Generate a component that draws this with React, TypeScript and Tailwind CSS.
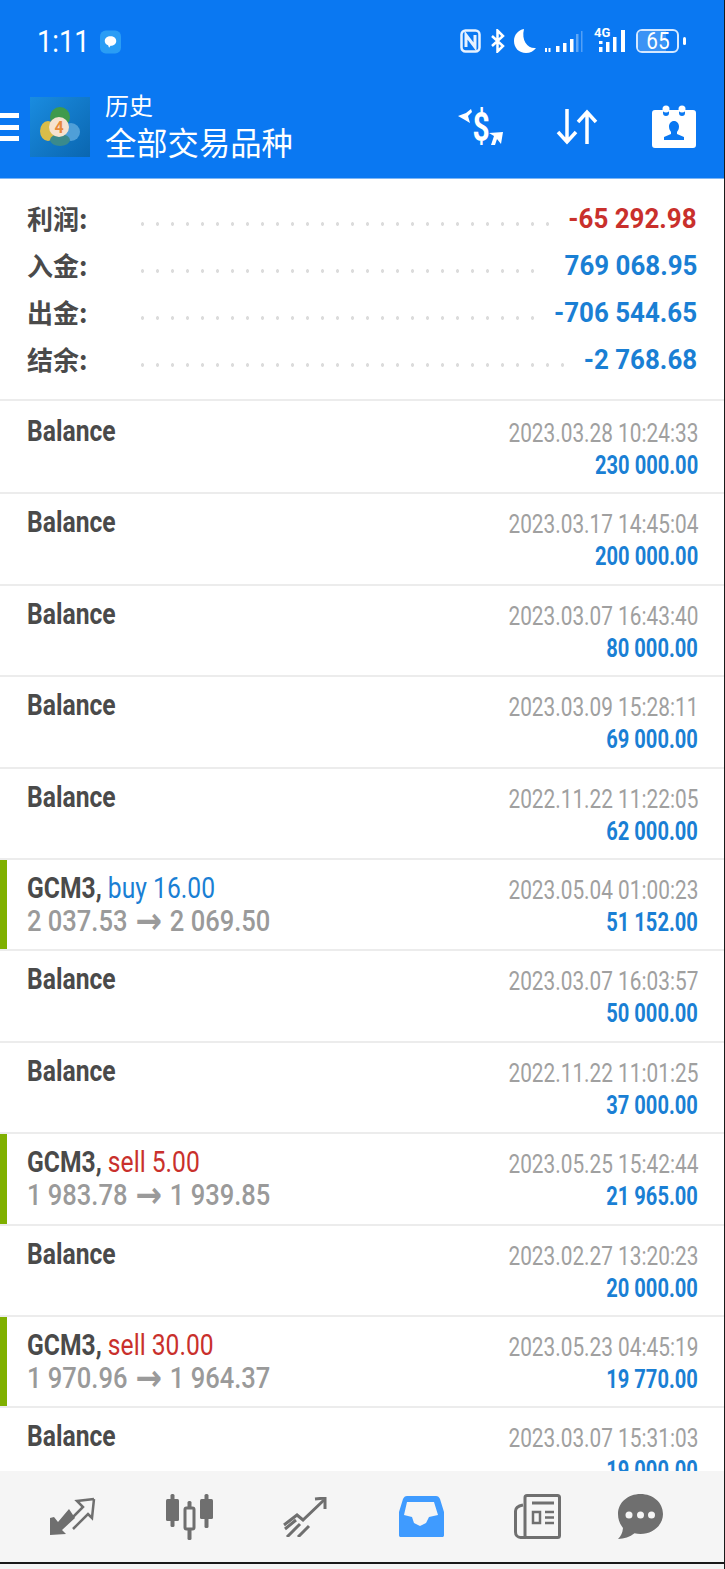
const summary = [
  { label: "利润:", value: "-65 292.98", color: "text-[#c9302c]", dots: "w-[420px]" },
  { label: "入金:", value: "769 068.95", color: "text-[#1a7fd4]", dots: "w-[405px]" },
  { label: "出金:", value: "-706 544.65", color: "text-[#1a7fd4]", dots: "w-[405px]" },
  { label: "结余:", value: "-2 768.68", color: "text-[#1a7fd4]", dots: "w-[435px]" },
];

type Row = {
  date: string;
  amount: string;
  side?: "buy" | "sell";
  lots?: string;
  from?: string;
  to?: string;
};

const rows: Row[] = [
  { date: "2023.03.28 10:24:33", amount: "230 000.00" },
  { date: "2023.03.17 14:45:04", amount: "200 000.00" },
  { date: "2023.03.07 16:43:40", amount: "80 000.00" },
  { date: "2023.03.09 15:28:11", amount: "69 000.00" },
  { date: "2022.11.22 11:22:05", amount: "62 000.00" },
  { date: "2023.05.04 01:00:23", amount: "51 152.00", side: "buy", lots: "16.00", from: "2 037.53", to: "2 069.50" },
  { date: "2023.03.07 16:03:57", amount: "50 000.00" },
  { date: "2022.11.22 11:01:25", amount: "37 000.00" },
  { date: "2023.05.25 15:42:44", amount: "21 965.00", side: "sell", lots: "5.00", from: "1 983.78", to: "1 939.85" },
  { date: "2023.02.27 13:20:23", amount: "20 000.00" },
  { date: "2023.05.23 04:45:19", amount: "19 770.00", side: "sell", lots: "30.00", from: "1 970.96", to: "1 964.37" },
  { date: "2023.03.07 15:31:03", amount: "19 000.00" },
];

function StatusIcons() {
  return (
    <div className="flex items-center text-white">
      {/* nfc */}
      <svg width="21" height="24" viewBox="0 0 21 24" fill="none" stroke="#e8f2ff" strokeWidth="2.5">
        <rect x="1.500" y="1.500" width="18" height="21" rx="4" />
        <path d="M6 18V6l9 12V6" strokeWidth="3" />
      </svg>
      {/* bluetooth */}
      <svg className="ml-[9px]" width="15" height="24" viewBox="0 0 15 24" fill="none" stroke="currentColor" strokeWidth="2.500">
        <path d="M2 7l11 10-5.500 5.500v-21L13 7 2 17" />
      </svg>
      {/* moon */}
      <svg className="ml-[9px]" width="22" height="24" viewBox="0 0 22 24" fill="currentColor">
        <path d="M10 0C4 1 0 6 0 12c0 7 5 12 12 12 4 0 8-2 10-5-8 1-15-7-12-19z" />
      </svg>
      {/* sim 1 signal, faint */}
      <svg className="ml-[9px]" width="38" height="24" viewBox="0 0 38 24" fill="currentColor">
        <rect x="0" y="19" width="2" height="4" />
        <rect x="3.500" y="19" width="2" height="4" />
        <rect x="11" y="17" width="3.500" height="6" />
        <rect x="18" y="14" width="3.500" height="9" />
        <rect x="25" y="10" width="3.500" height="13" />
        <rect x="31" y="5" width="2.500" height="18" opacity="0.35" />
        <rect x="36" y="2" width="1.500" height="21" opacity="0.3" />
      </svg>
      <span className="relative ml-[11px] h-[24px] w-[33px]">
        <span className="absolute left-0 top-[-2px] font-['Roboto',sans-serif] text-[13px] font-bold leading-[12px]">4G</span>
        <svg className="absolute inset-0" width="33" height="24" viewBox="0 0 33 24" fill="currentColor">
          <rect x="5" y="18" width="3.500" height="5" />
          <rect x="5" y="12" width="3.500" height="3" />
          <rect x="12" y="13" width="3.500" height="10" />
          <rect x="19" y="8" width="3.500" height="15" />
          <rect x="27" y="1" width="4" height="22" />
        </svg>
      </span>
      {/* battery */}
      <span className="relative ml-[9px] flex h-[24px] w-[43px] items-center justify-center overflow-hidden rounded-[6px] border-2 border-[#d5e8ff] font-['Roboto',sans-serif] text-[23px] leading-none">
        <span className="absolute bottom-0 left-0 top-0 w-[28px] bg-[#3b93f5]" />
        <span className="relative inline-block scale-x-[0.9]">65</span>
      </span>
      <span className="ml-[4px] h-[8px] w-[3px] rounded-sm bg-white" />
    </div>
  );
}

function Logo() {
  return (
    <div className="flex h-[60px] w-[60px] shrink-0 items-center justify-center bg-gradient-to-br from-[#1a8ce0] to-[#0a66b0]">
      <svg width="40" height="40" viewBox="0 0 40 40">
        <ellipse cx="20" cy="10" rx="10" ry="10" fill="#3f9a4c" />
        <ellipse cx="8" cy="24" rx="8" ry="10" fill="#d9bd4a" />
        <ellipse cx="31" cy="25" rx="9" ry="9" fill="#4f9fd8" />
        <ellipse cx="20" cy="33" rx="10" ry="6" fill="#3a8a8c" />
        <circle cx="19" cy="20" r="10" fill="#f6e2cf" />
        <text x="19" y="26" textAnchor="middle" fontSize="16" fontWeight="700" fill="#e88a3c" fontFamily="Roboto, sans-serif">4</text>
      </svg>
    </div>
  );
}

function Header() {
  return (
    <header className="h-[179px] shrink-0 border-b border-[#7db6f5] bg-[#0a78f2] text-white">
      <div className="flex h-[90px] items-start justify-between pl-[37px] pr-[38px] pt-[29px]">
        <div className="flex items-center">
          <span className="inline-block w-[63px] origin-left scale-x-[0.88] font-['Roboto',sans-serif] text-[31px] leading-[26px]">1:11</span>
          <svg width="21" height="24" viewBox="0 0 22 24">
            <rect width="22" height="24" rx="6" fill="#2a9df5" />
            <path d="M11 6c3.500 0 6 2 6 5s-2.500 5-6 5l-1.500 2-1-2.500C6 14.500 5 13 5 11c0-3 2.500-5 6-5z" fill="#fff" />
          </svg>
        </div>
        <StatusIcons />
      </div>

      <div className="flex items-center">
        <div className="flex h-[28px] w-[19px] shrink-0 flex-col justify-between">
          <span className="h-[5px] bg-white" />
          <span className="h-[5px] bg-white" />
          <span className="h-[5px] bg-white" />
        </div>
        <div className="ml-[11px]">
          <Logo />
        </div>
        <div className="ml-[15px] flex flex-col font-['Noto_Sans_CJK_SC',sans-serif]">
          <span className="text-[24px] leading-[30px]">历史</span>
          <span className="text-[31.3px] leading-[44px]">全部交易品种</span>
        </div>
        <div className="ml-auto flex items-center pr-[28px]">
          <svg className="overflow-visible" width="46" height="38" viewBox="0 0 46 38" fill="currentColor">
            <text transform="translate(23 33) scale(0.75 1)" textAnchor="middle" fontSize="40" fontWeight="700" fontFamily="Roboto, sans-serif">$</text>
            <path d="M0 8L8 5l5-4 1 3-4 4 2 7-5-3z" />
            <path d="M33 37l3-9-5-3 14-1-2 12-4-5-2 6z" />
          </svg>
          <svg className="ml-[52px]" width="42" height="36" viewBox="0 0 42 36" fill="none" stroke="currentColor" strokeWidth="3.500">
            <path d="M11 0v33M2 23l9 10 9-10" />
            <path d="M31 35V3M22 13l9-10 9 10" />
          </svg>
          <svg className="ml-[54px]" width="44" height="44" viewBox="0 0 44 44" fill="currentColor">
            <path d="M3 5h8v3a3 3 0 006 0V5h10v3a3 3 0 006 0V5h8a3 3 0 013 3v32a3 3 0 01-3 3H3a3 3 0 01-3-3V8a3 3 0 013-3z" />
            <circle cx="14" cy="4" r="3.500" />
            <circle cx="30" cy="4" r="3.500" />
            <path d="M22 16c3 0 5 2.500 5 5.500 0 2.500-1 4-2 5.500v2l7 3v3H12v-3l7-3v-2c-1-1.500-2-3-2-5.500 0-3 2-5.500 5-5.500z" fill="#0a78f2" />
          </svg>
        </div>
      </div>
    </header>
  );
}

function Summary() {
  return (
    <section className="flex h-[222px] shrink-0 flex-col border-b-2 border-[#ececec] bg-white pl-[27px] pr-[27px] pt-[17px]">
      {summary.map((item) => (
        <div key={item.label} className="flex h-[47px] items-center">
          <span className="-mt-[3px] w-[108px] shrink-0 font-['Noto_Sans_CJK_SC',sans-serif] text-[26px] font-bold leading-none text-[#4a4a4a]">
            {item.label}
          </span>
          <span
            className={`mt-[8px] h-[6px] shrink-0 bg-[radial-gradient(circle,#dcdcdc_1.5px,transparent_2px)] bg-[length:15px_6px] bg-repeat-x ${item.dots}`}
          />
          <span className={`ml-auto origin-right scale-x-[0.96] whitespace-nowrap font-['Roboto',sans-serif] text-[27px] font-bold leading-none ${item.color}`}>
            {item.value}
          </span>
        </div>
      ))}
    </section>
  );
}

function HistoryRow({ row }: { row: Row }) {
  const isTrade = Boolean(row.side);
  return (
    <div className="relative flex h-[91.4px] shrink-0 justify-between border-b-2 border-[#ececec] bg-white pl-[27px] pr-[26px] pt-[10px]">
      {isTrade && <span className="absolute bottom-0 left-0 top-0 w-[7px] bg-[#7fb000]" />}
      <div className="flex flex-col">
        <div className="origin-left scale-x-[0.85] whitespace-nowrap font-['Roboto',sans-serif] text-[29px] leading-[36px]">
          {isTrade ? (
            <>
              <span className="font-bold text-[#4a4a4a]">GCM3, </span>
              <span className={row.side === "buy" ? "text-[#1a7fd4]" : "text-[#c9302c]"}>
                {row.side} {row.lots}
              </span>
            </>
          ) : (
            <span className="font-bold text-[#4a4a4a]">Balance</span>
          )}
        </div>
        {row.from && (
          <div className="flex origin-left scale-x-[0.88] items-center whitespace-nowrap font-['Roboto',sans-serif] text-[29px] font-medium leading-[30px] text-[#9a9a9a]">
            <span>{row.from}</span>
            <span className="mx-[9px] font-['DejaVu_Sans',sans-serif] text-[36px] font-bold leading-[30px]">→</span>
            <span>{row.to}</span>
          </div>
        )}
      </div>
      <div className="flex flex-col items-end pt-[2px]">
        <span className="origin-right scale-x-[0.8] whitespace-nowrap font-['Roboto',sans-serif] text-[26px] leading-[36px] text-[#a0a0a0]">
          {row.date}
        </span>
        <span className="origin-right scale-x-[0.805] whitespace-nowrap font-['Roboto',sans-serif] text-[25px] font-bold leading-[30px] text-[#1a7fd4]">
          {row.amount}
        </span>
      </div>
    </div>
  );
}

function BottomNav() {
  return (
    <nav className="flex h-[93px] shrink-0 items-center border-b-2 border-[#1a1a1a] bg-[#f5f5f5] pl-[15px] text-[#6f6f6f]">
      <div className="flex w-[116px] justify-center">
        <svg width="46" height="40" viewBox="0 0 46 40" fill="none">
          <path d="M0 21v17l16-1-4-4 13-12-6-9-11 13-4-5z" fill="currentColor" />
          <path d="M44 2L27 4l6 6-13 13M23 32l15-15 4 4 2-19" stroke="currentColor" strokeWidth="2.500" />
        </svg>
      </div>
      <div className="flex w-[116px] justify-center">
        <svg width="48" height="46" viewBox="0 0 48 46" fill="currentColor">
          <rect x="5.500" y="0" width="4" height="33" rx="1.500" />
          <rect x="1" y="5" width="13" height="22" rx="1.500" />
          <rect x="39.500" y="0" width="4" height="34" rx="1.500" />
          <rect x="35" y="5" width="13" height="20" rx="1.500" />
          <rect x="22.500" y="7" width="4" height="39" rx="1.500" />
          <rect x="20" y="14" width="9" height="21" rx="1.500" fill="#f5f5f5" stroke="currentColor" strokeWidth="3" />
        </svg>
      </div>
      <div className="flex w-[116px] justify-center">
        <svg width="44" height="40" viewBox="0 0 44 40" fill="none" stroke="currentColor" strokeWidth="3">
          <path d="M1 28l13-10 6 5L41 3" />
          <path d="M32 2l10-1v11" />
          <path d="M2 32l11-9M4 40l13-13M15 40l11-11" />
        </svg>
      </div>
      <div className="flex w-[116px] justify-center">
        <svg width="45" height="41" viewBox="0 0 45 41" fill="#3f9bff">
          <path
            d="M8 0h29c2 0 3 1 4 3l4 13v23c0 1.500-.5 2-2 2H2c-1.500 0-2-.5-2-2V16L4 3c1-2 2-3 4-3zm0 6L5 19l8 2 2 6 6 3 6-3 3-6 9-2-4-13z"
            fillRule="evenodd"
          />
        </svg>
      </div>
      <div className="flex w-[116px] justify-center">
        <svg width="47" height="45" viewBox="0 0 47 45" fill="none" stroke="currentColor" strokeWidth="3">
          <rect x="11" y="1.500" width="34.500" height="42" rx="2" />
          <path d="M9 11c-5 1-7.500 3-7.500 6v21c0 3 2 5.500 5 5.500h6" />
          <path d="M18 9h22" />
          <rect x="19" y="18" width="7" height="11" strokeWidth="2.500" />
          <path d="M31 18h9M31 23.500h9M31 29h9" strokeWidth="2.500" />
        </svg>
      </div>
      <div className="-ml-[13px] flex w-[116px] justify-center">
        <svg width="45" height="45" viewBox="0 0 45 45" fill="currentColor">
          <path d="M22.500 0C35 0 45 8.500 45 20c0 11-10 20-22.500 20-2 0-4-.2-6-.7C12 43 6 45 0 45c3-3 4.500-6 5-11C2 30 0 26 0 20 0 8.500 10 0 22.500 0z" />
          <circle cx="11" cy="21" r="3.500" fill="#f5f5f5" />
          <circle cx="22.500" cy="21" r="3.500" fill="#f5f5f5" />
          <circle cx="33.500" cy="21" r="3.500" fill="#f5f5f5" />
        </svg>
      </div>
    </nav>
  );
}

export default function App() {
  return (
    <div className="flex h-[1569px] w-[725px] flex-col overflow-hidden border-r border-[#1a1a1a] bg-[#f5f5f5]">
      <Header />
      <Summary />
      <div className="flex min-h-0 flex-1 flex-col overflow-hidden bg-white pt-[2px]">
        {rows.map((row) => (
          <HistoryRow key={row.date} row={row} />
        ))}
      </div>
      <BottomNav />
      <div className="h-[5px] shrink-0 bg-[#f5f5f5]" />
    </div>
  );
}
